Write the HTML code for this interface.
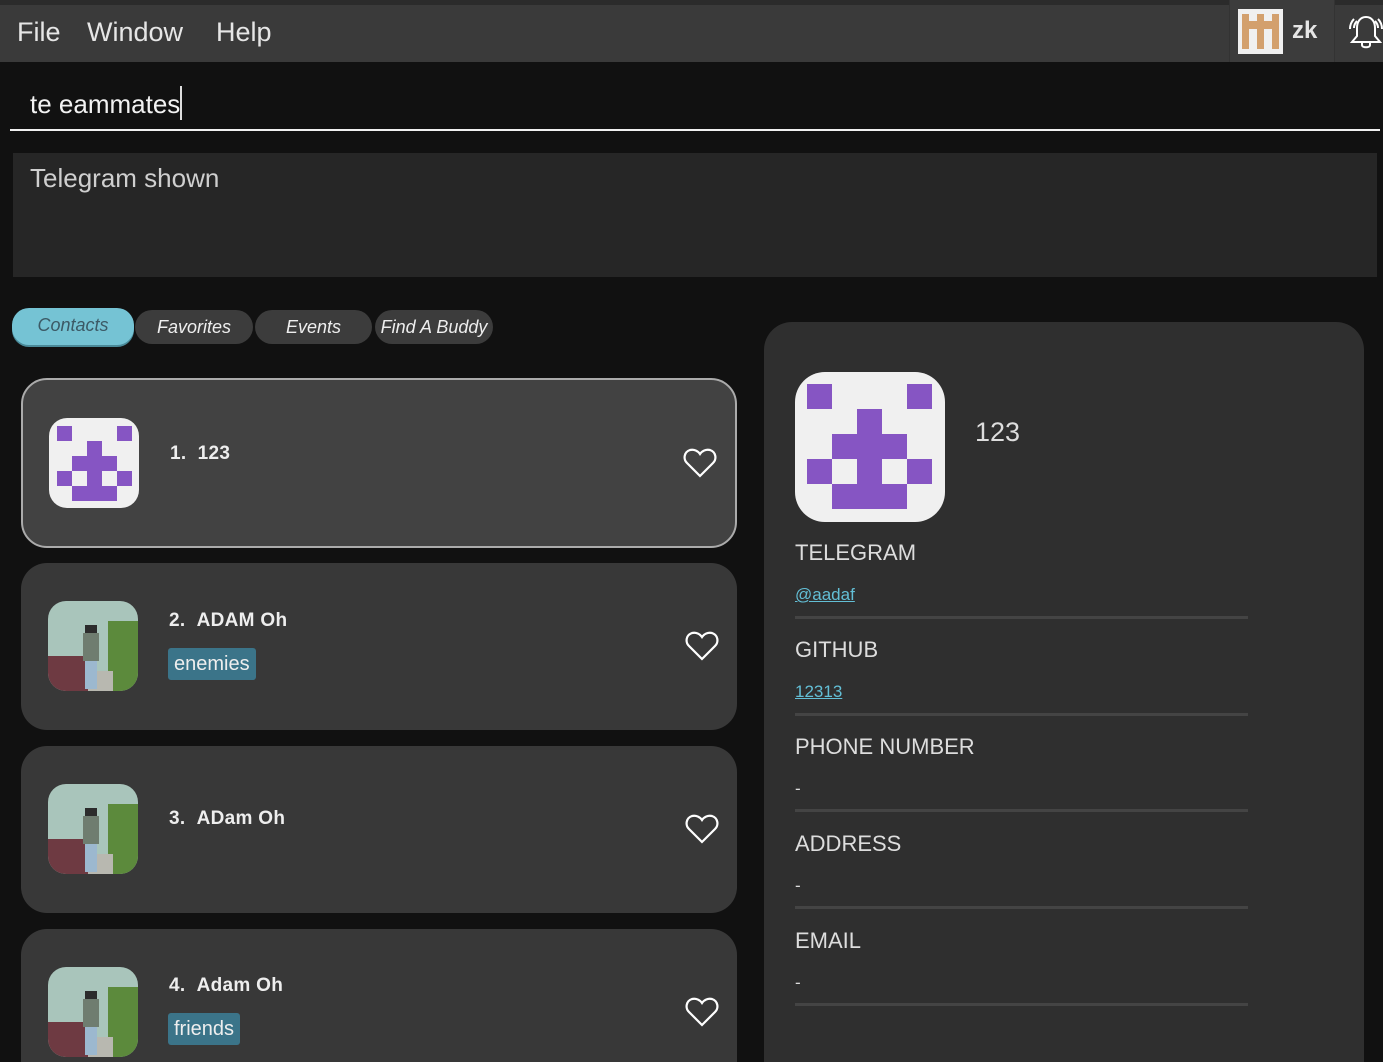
<!DOCTYPE html>
<html><head><meta charset="utf-8"><style>
*{margin:0;padding:0;box-sizing:border-box}
html,body{width:1383px;height:1062px;overflow:hidden}
body{background:#111;font-family:"Liberation Sans",sans-serif;position:relative;color:#e0e0e0}
.abs{position:absolute}
.menu{left:0;top:0;width:1383px;height:62px;background:#3a3a3a;border-top:5px solid #2b2b2b}
.menu span{position:absolute;top:12px;font-size:27px;color:#e6e6e6}
.tab{position:absolute;top:310px;height:34px;border-radius:17px;background:#3c3c3c;color:#eee;font-style:italic;font-size:18px;text-align:center;line-height:34px}
.card{position:absolute;left:21px;width:716px;border-radius:26px;background:#383838}
.name{position:absolute;left:148px;font-size:19px;color:#eee;font-weight:bold;letter-spacing:.3px}
.tag{position:absolute;left:147px;height:32px;background:#3b7489;border-radius:3px;color:#eee;font-size:20px;line-height:32px;padding:0 6px}
.heart{position:absolute;left:663px}
.lbl{position:absolute;left:795px;font-size:22px;color:#ddd}
.val{position:absolute;left:795px;font-size:17px}
.link{color:#63bfd6;text-decoration:underline}
.sep{position:absolute;left:795px;width:453px;height:3px;background:#444}
</style></head><body>
<div class="abs menu"><span style="left:17px">File</span><span style="left:87px">Window</span><span style="left:216px">Help</span>
<div class="abs" style="left:1229px;top:-5px;width:106px;height:62px;background:#3c3c3c;border-left:1px solid #333;border-right:1px solid #333"></div>
<svg class="abs" style="left:1238px;top:4px" width="45" height="45" viewBox="0 0 45 45"><rect width="45" height="45" fill="#f0f0f0"/><g fill="#d3a06d"><rect x="4" y="5" width="7" height="7"/><rect x="19" y="5" width="7" height="7"/><rect x="34" y="5" width="7" height="7"/><rect x="4" y="12" width="37" height="8"/><rect x="4" y="20" width="7" height="20"/><rect x="19" y="20" width="7" height="20"/><rect x="34" y="20" width="7" height="20"/></g></svg>
<span style="left:1292px;top:12px;font-size:24px;color:#e6e6e6;font-weight:bold">zk</span>
<svg class="abs" style="left:1348px;top:8px" width="36" height="42" viewBox="0 0 36 42" fill="none" stroke="#fff" stroke-width="2"><path d="M18 4c-6 0-9 5-9 11v8l-5 6h28l-5-6v-8c0-6-3-11-9-11z"/><path d="M14 29v3c0 3 8 3 8 0v-3"/><path d="M6 6c-3 3-4 6-4 10M9 8c-2 2-3 4-3 7M30 6c3 3 4 6 4 10M27 8c2 2 3 4 3 7"/></svg>
</div>
<div class="abs" style="left:30px;top:86px;font-size:26px;color:#f2f2f2">te eammates<span style="display:inline-block;width:2px;height:34px;background:#ddd;vertical-align:-7px"></span></div>
<div class="abs" style="left:10px;top:129px;width:1370px;height:2px;background:#f0f0f0"></div>
<div class="abs" style="left:13px;top:153px;width:1364px;height:124px;background:#262626"></div>
<div class="abs" style="left:30px;top:163px;font-size:26px;color:#cfcfcf">Telegram shown</div>
<div class="tab" style="left:12px;top:308px;width:122px;height:37px;background:#75c3d4;color:#3c5a66;box-shadow:0 2px 0 #4a8a99">Contacts</div>
<div class="tab" style="left:135px;width:118px">Favorites</div>
<div class="tab" style="left:255px;width:117px">Events</div>
<div class="tab" style="left:375px;width:118px">Find A Buddy</div>

<div class="card" style="top:378px;height:170px;background:#424242;border:2px solid #ababab">
<svg class="abs" style="left:26px;top:38px" width="90" height="90" viewBox="0 0 90 90"><rect width="90" height="90" rx="18" fill="#f0f0f0"/><g fill="#8655c3"><rect x="8" y="8" width="15" height="15"/><rect x="68" y="8" width="15" height="15"/><rect x="38" y="23" width="15" height="15"/><rect x="23" y="38" width="45" height="15"/><rect x="8" y="53" width="15" height="15"/><rect x="38" y="53" width="15" height="15"/><rect x="68" y="53" width="15" height="15"/><rect x="23" y="68" width="45" height="15"/></g></svg>
<div class="name" style="top:63px;left:147px">1.&nbsp;&nbsp;123</div>
<svg class="heart" style="top:68px;left:660px" width="34" height="30" viewBox="0 0 34 30" fill="none" stroke="#fff" stroke-width="2.2"><path d="M17 28L4 15C0 11 1 4 7 2c4-1 8 1 10 4 2-3 6-5 10-4 6 2 7 9 3 13z"/></svg>
</div>

<div class="card" style="top:563px;height:167px">
<svg class="abs" style="left:27px;top:38px" width="90" height="90" viewBox="0 0 90 90"><defs><clipPath id="c1"><rect width="90" height="90" rx="18"/></clipPath></defs><g clip-path="url(#c1)"><rect width="90" height="90" fill="#a9c5bb"/><rect y="55" width="40" height="35" fill="#6e3a42"/><rect x="60" y="20" width="30" height="70" fill="#5c8a3c"/><rect x="40" y="70" width="25" height="20" fill="#b8b8b0"/><rect x="37" y="24" width="12" height="10" fill="#2c2c2c"/><rect x="35" y="32" width="16" height="28" fill="#6f7d70"/><rect x="37" y="60" width="12" height="28" fill="#9cb8cf"/></g></svg>
<div class="name" style="top:47px">2.&nbsp;&nbsp;ADAM Oh</div>
<div class="tag" style="top:85px">enemies</div>
<svg class="heart" style="top:68px;left:664px" width="34" height="30" viewBox="0 0 34 30" fill="none" stroke="#fff" stroke-width="2.2"><path d="M17 28L4 15C0 11 1 4 7 2c4-1 8 1 10 4 2-3 6-5 10-4 6 2 7 9 3 13z"/></svg>
</div>

<div class="card" style="top:746px;height:167px">
<svg class="abs" style="left:27px;top:38px" width="90" height="90" viewBox="0 0 90 90"><defs><clipPath id="c2"><rect width="90" height="90" rx="18"/></clipPath></defs><g clip-path="url(#c2)"><rect width="90" height="90" fill="#a9c5bb"/><rect y="55" width="40" height="35" fill="#6e3a42"/><rect x="60" y="20" width="30" height="70" fill="#5c8a3c"/><rect x="40" y="70" width="25" height="20" fill="#b8b8b0"/><rect x="37" y="24" width="12" height="10" fill="#2c2c2c"/><rect x="35" y="32" width="16" height="28" fill="#6f7d70"/><rect x="37" y="60" width="12" height="28" fill="#9cb8cf"/></g></svg>
<div class="name" style="top:62px">3.&nbsp;&nbsp;ADam Oh</div>
<svg class="heart" style="top:68px;left:664px" width="34" height="30" viewBox="0 0 34 30" fill="none" stroke="#fff" stroke-width="2.2"><path d="M17 28L4 15C0 11 1 4 7 2c4-1 8 1 10 4 2-3 6-5 10-4 6 2 7 9 3 13z"/></svg>
</div>

<div class="card" style="top:929px;height:167px">
<svg class="abs" style="left:27px;top:38px" width="90" height="90" viewBox="0 0 90 90"><defs><clipPath id="c3"><rect width="90" height="90" rx="18"/></clipPath></defs><g clip-path="url(#c3)"><rect width="90" height="90" fill="#a9c5bb"/><rect y="55" width="40" height="35" fill="#6e3a42"/><rect x="60" y="20" width="30" height="70" fill="#5c8a3c"/><rect x="40" y="70" width="25" height="20" fill="#b8b8b0"/><rect x="37" y="24" width="12" height="10" fill="#2c2c2c"/><rect x="35" y="32" width="16" height="28" fill="#6f7d70"/><rect x="37" y="60" width="12" height="28" fill="#9cb8cf"/></g></svg>
<div class="name" style="top:46px">4.&nbsp;&nbsp;Adam Oh</div>
<div class="tag" style="top:84px">friends</div>
<svg class="heart" style="top:68px;left:664px" width="34" height="30" viewBox="0 0 34 30" fill="none" stroke="#fff" stroke-width="2.2"><path d="M17 28L4 15C0 11 1 4 7 2c4-1 8 1 10 4 2-3 6-5 10-4 6 2 7 9 3 13z"/></svg>
</div>

<div class="abs" style="left:764px;top:322px;width:600px;height:780px;background:#2f2f2f;border-radius:28px"></div>
<svg class="abs" style="left:795px;top:372px" width="150" height="150" viewBox="0 0 150 150"><rect width="150" height="150" rx="30" fill="#f0f0f0"/><g fill="#8655c3"><rect x="12" y="12" width="25" height="25"/><rect x="112" y="12" width="25" height="25"/><rect x="62" y="37" width="25" height="25"/><rect x="37" y="62" width="75" height="25"/><rect x="12" y="87" width="25" height="25"/><rect x="62" y="87" width="25" height="25"/><rect x="112" y="87" width="25" height="25"/><rect x="37" y="112" width="75" height="25"/></g></svg>
<div class="abs" style="left:975px;top:417px;font-size:27px;color:#ddd">123</div>
<div class="lbl" style="top:540px">TELEGRAM</div>
<div class="val" style="top:585px"><span class="link">@aadaf</span></div>
<div class="sep" style="top:616px"></div>
<div class="lbl" style="top:637px">GITHUB</div>
<div class="val" style="top:682px"><span class="link">12313</span></div>
<div class="sep" style="top:713px"></div>
<div class="lbl" style="top:734px">PHONE NUMBER</div>
<div class="val" style="top:779px;color:#ddd">-</div>
<div class="sep" style="top:809px"></div>
<div class="lbl" style="top:831px">ADDRESS</div>
<div class="val" style="top:876px;color:#ddd">-</div>
<div class="sep" style="top:906px"></div>
<div class="lbl" style="top:928px">EMAIL</div>
<div class="val" style="top:973px;color:#ddd">-</div>
<div class="sep" style="top:1003px"></div>
</body></html>
